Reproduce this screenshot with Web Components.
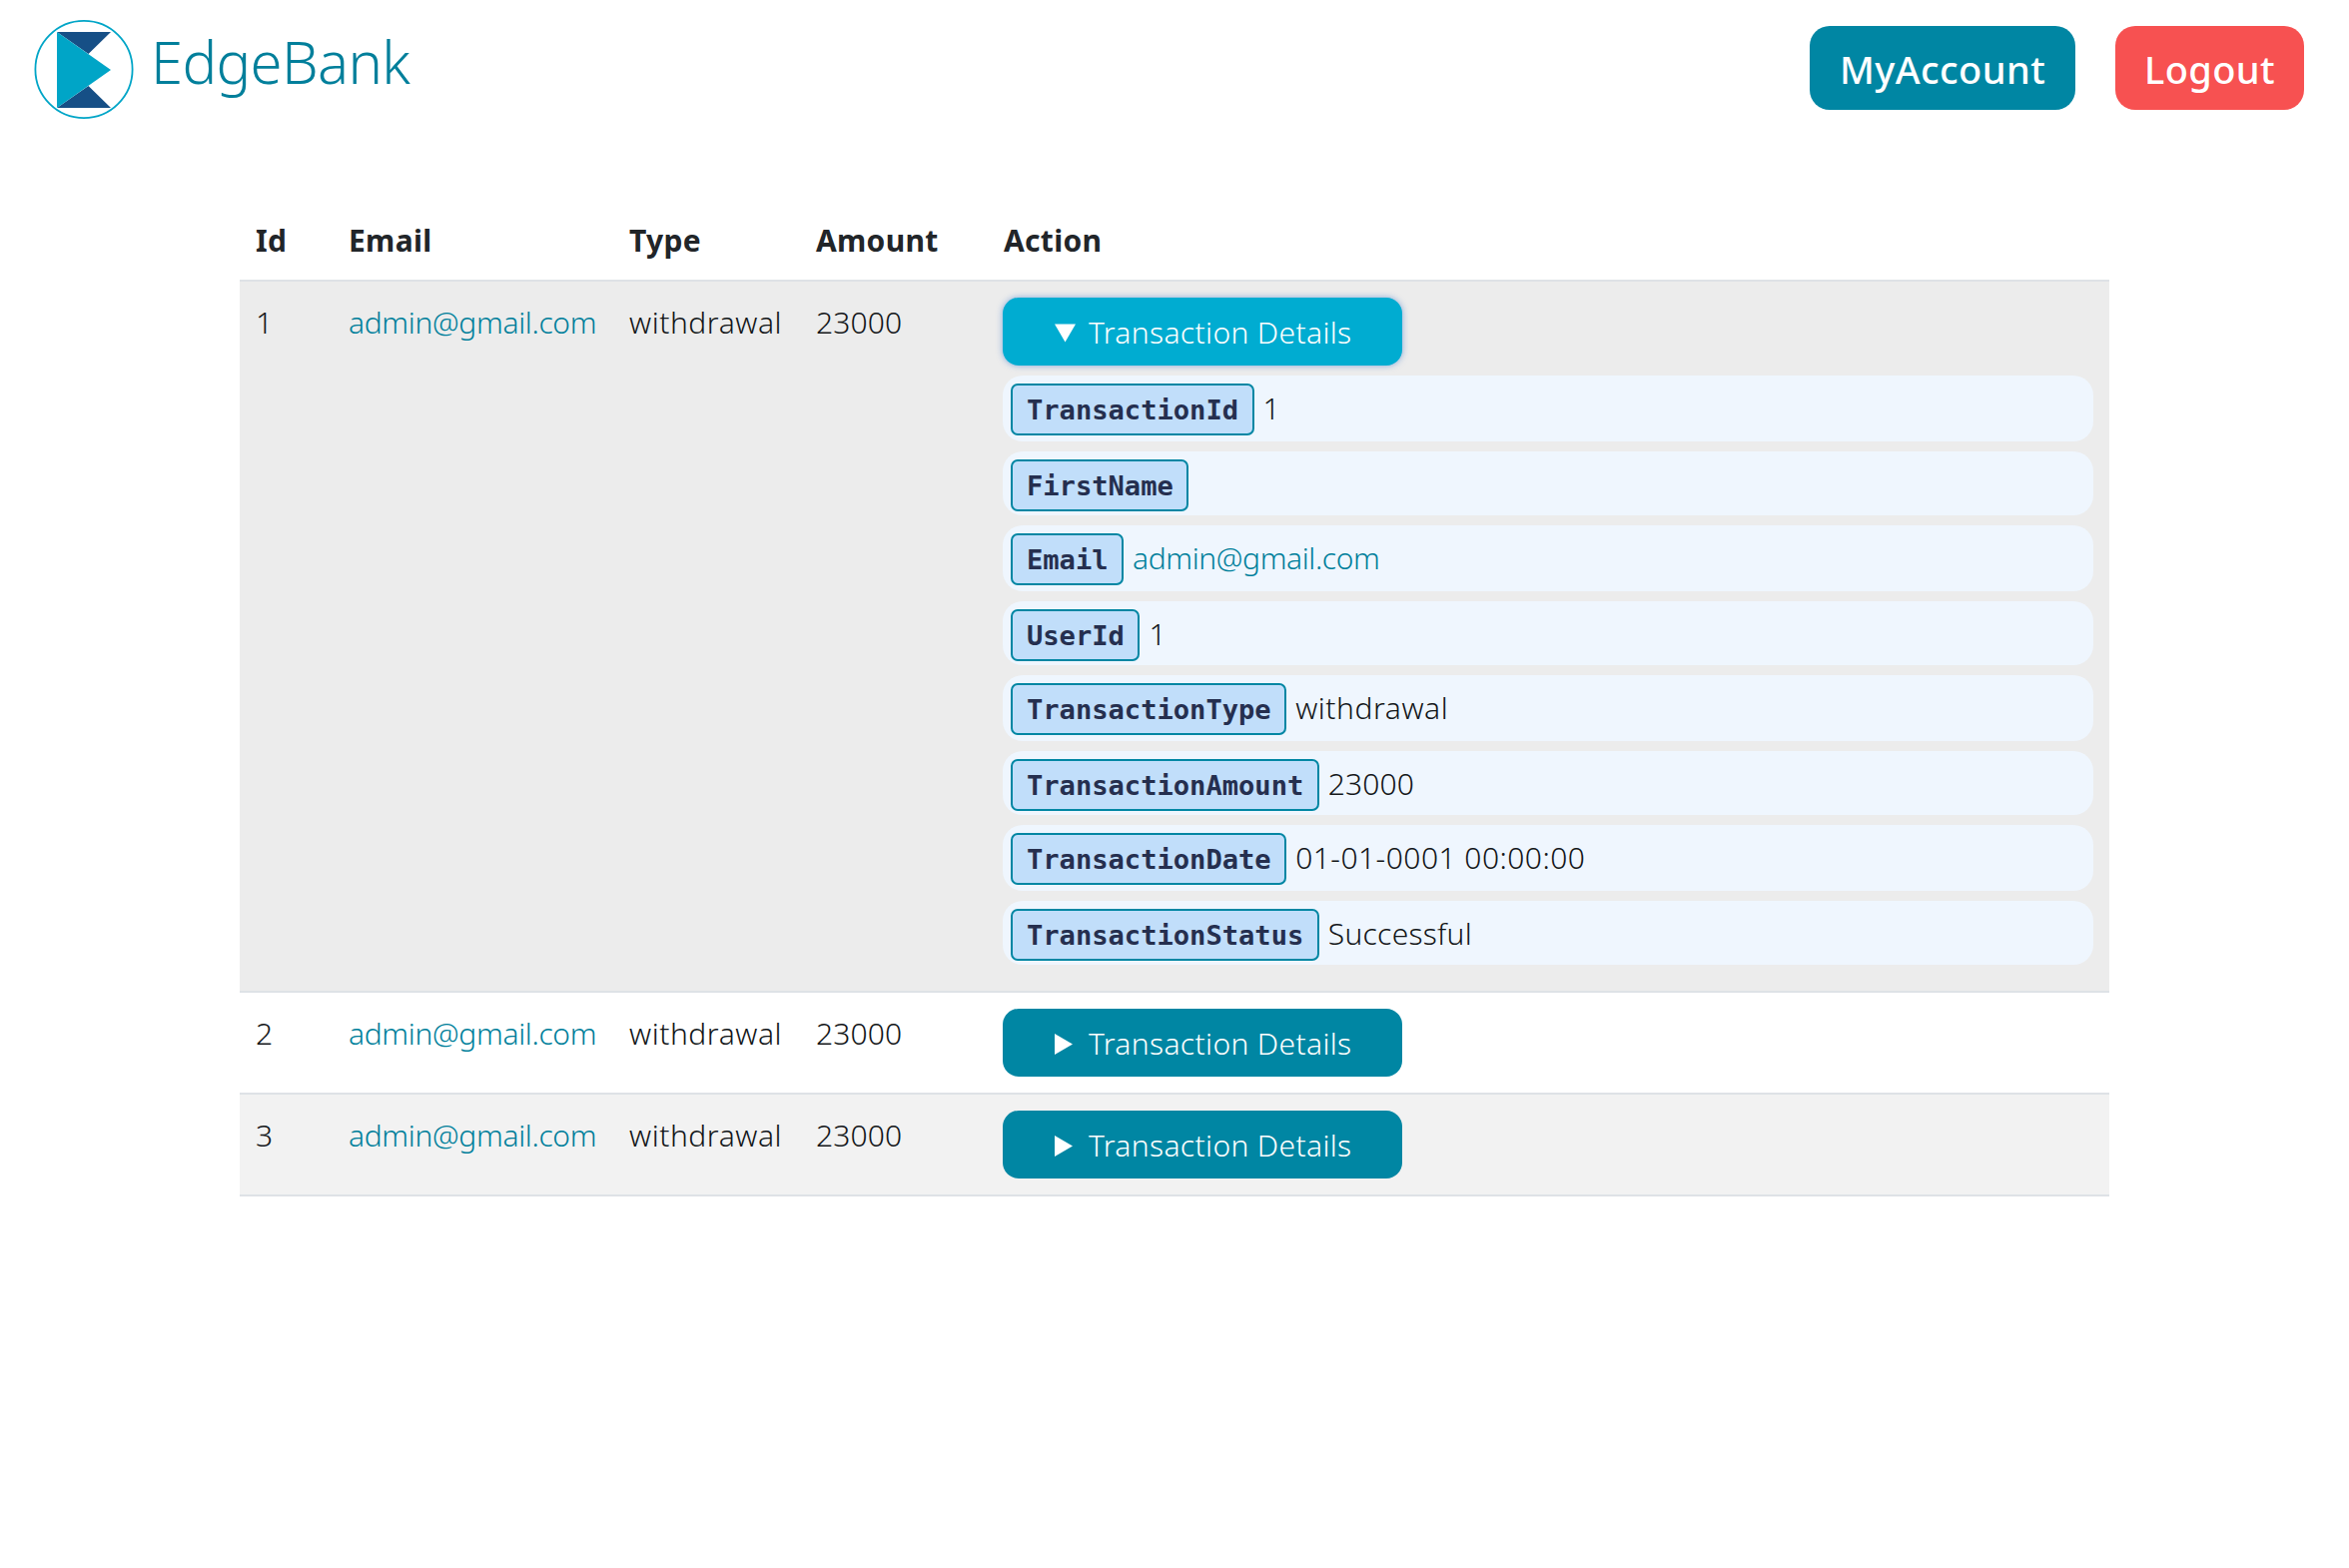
<!DOCTYPE html>
<html lang="en">
<head>
<meta charset="utf-8">
<title>EdgeBank</title>
<style>
  html, body { margin: 0; background: #fff; }
  body { font-family: "Noto Sans", sans-serif; color: #212529; }
</style>
</head>
<body>
<bank-page>
  <site-header slot="header"></site-header>
  <transaction-table>
    <transaction-row row-id="1" email="admin@gmail.com" type="withdrawal" amount="23000" open tint="#ececec">
      <detail-item label="TransactionId">1</detail-item>
      <detail-item label="FirstName"></detail-item>
      <detail-item label="Email"><a-link>admin@gmail.com</a-link></detail-item>
      <detail-item label="UserId">1</detail-item>
      <detail-item label="TransactionType" spacing="0.55px">withdrawal</detail-item>
      <detail-item label="TransactionAmount" spacing="0.1px">23000</detail-item>
      <detail-item label="TransactionDate" spacing="0.45px">01-01-0001 00:00:00</detail-item>
      <detail-item label="TransactionStatus" spacing="0.25px">Successful</detail-item>
    </transaction-row>
    <transaction-row row-id="2" email="admin@gmail.com" type="withdrawal" amount="23000"></transaction-row>
    <transaction-row row-id="3" email="admin@gmail.com" type="withdrawal" amount="23000" tint="#f2f2f2"></transaction-row>
  </transaction-table>
</bank-page>

<script>
const TEAL = '#0086a3';
const LINK_TEAL = '#007f9b';
const THIN_INK = '#14171a';
const BODY_TEXT = 'font-size: 30px; font-weight: 300; line-height: 45px;';

class BankPage extends HTMLElement {
    constructor() {
        super();
        this.attachShadow({mode: 'open'});
        this.shadowRoot.innerHTML = `
            <style>
                :host { display: block; min-height: 1570px; }
                main { padding: 0 240px; }
            </style>
            <slot name="header"></slot>
            <main><slot></slot></main>
        `;
    }
}

class SiteHeader extends HTMLElement {
    constructor() {
        super();
        this.attachShadow({mode: 'open'});
        this.shadowRoot.innerHTML = `
            <style>
                :host { display: flex; justify-content: space-between; align-items: flex-start;
                        height: 204px; box-sizing: border-box; padding: 20px 45px 0 34px; }
                .brand { display: flex; align-items: center; gap: 17px; height: 100px; color: ${LINK_TEAL};
                         font-size: 58px; font-weight: 300; letter-spacing: -0.65px; line-height: 70px; }
                .brand span { position: relative; top: -8px; }
                svg { display: block; }
                nav { display: flex; gap: 40px; margin-top: 6px; }
                button { height: 84px; border: 0; border-radius: 20px; padding: 2px 0 0; color: #fff;
                         font: 500 38px "Noto Sans", sans-serif; letter-spacing: 0.4px; cursor: pointer; }
                .account { width: 266px; background: ${TEAL}; }
                .logout { width: 189px; background: #f75151; }
            </style>
            <div class="brand">
                <svg width="100" height="100" viewBox="0 0 100 100" aria-hidden="true">
                    <circle cx="50" cy="49.5" r="48.6" fill="#fff" stroke="#00a5c7" stroke-width="1.8"/>
                    <path d="M23 12H77L54.5 34ZM23 88H77L54.5 66Z" fill="#164f86"/>
                    <path d="M23 12L77 50L23 88Z" fill="#00a5c7"/>
                </svg>
                <span>EdgeBank</span>
            </div>
            <nav>
                <button class="account">MyAccount</button>
                <button class="logout">Logout</button>
            </nav>
        `;
    }
}

const COLUMNS = 'grid-template-columns: 93px 281px 187px 188px 1fr;';

class TransactionTable extends HTMLElement {
    constructor() {
        super();
        this.attachShadow({mode: 'open'});
        this.shadowRoot.innerHTML = `
            <style>
                :host { display: block; }
                .head { display: grid; ${COLUMNS} border-bottom: 2px solid #dee2e6; }
                .head div { padding: 14px 16px 17px; font-size: 30px; font-weight: 700; letter-spacing: 0.3px; line-height: 45px; color: #212529; }
            </style>
            <div class="head">
                <div>Id</div><div>Email</div><div>Type</div><div>Amount</div><div>Action</div>
            </div>
            <slot></slot>
        `;
    }
}

class TransactionRow extends HTMLElement {
    constructor() {
        super();
        this.attachShadow({mode: 'open'});
    }

    connectedCallback() {
        const tint = this.getAttribute('tint') || '#fff';
        this.shadowRoot.innerHTML = `
            <style>
                :host { display: grid; ${COLUMNS} background: ${tint}; border-bottom: 2px solid #dee2e6; }
                .cell { padding: 18px 16px 0; ${BODY_TEXT} color: ${THIN_INK}; }
                .mail { color: ${LINK_TEAL}; letter-spacing: -0.35px; }
                .kind { letter-spacing: 0.55px; }
                .sum { letter-spacing: 0.1px; }
                .action { padding: 16px 16px 16px 15px; min-width: 0; }
                button { display: flex; align-items: center; width: 400px; height: 68px; padding: 1px 0 0 52px;
                         border: 0; border-radius: 16px; background: ${TEAL}; color: #fff; cursor: pointer;
                         font: 300 30px "Noto Sans", sans-serif; letter-spacing: 0.35px; }
                button svg { display: block; width: 21px; height: 21px; margin: 1px 13px 0 0; flex: none; }
                :host([open]) button { background: #00acd1; box-shadow: 0 0 6px rgba(40, 110, 200, .55); }
                .list { display: none; padding-bottom: 10px; }
                :host([open]) .list { display: block; }
            </style>
            <div class="cell">${this.getAttribute('row-id')}</div>
            <div class="cell mail">${this.getAttribute('email')}</div>
            <div class="cell kind">${this.getAttribute('type')}</div>
            <div class="cell sum">${this.getAttribute('amount')}</div>
            <div class="action">
                <button type="button">
                    <svg viewBox="0 0 21 21" aria-hidden="true"><path fill="#fff" d=""/></svg>
                    Transaction Details
                </button>
                <div class="list"><slot></slot></div>
            </div>
        `;
        this.button = this.shadowRoot.querySelector('button');
        this.button.addEventListener('click', () => this.toggleAttribute('open'));
        this.drawArrow();
    }

    static get observedAttributes() {
        return [ 'open' ];
    }

    attributeChangedCallback() {
        if (this.button) this.drawArrow();
    }

    drawArrow() {
        const arrow = this.shadowRoot.querySelector('svg path');
        arrow.setAttribute('d', this.hasAttribute('open') ? 'M0 1.5H21L10.5 19.5Z' : 'M0 0L18 10.5L0 21Z');
    }
}

class DetailItem extends HTMLElement {
    constructor() {
        super();
        this.attachShadow({mode: 'open'});
    }

    connectedCallback() {
        const spacing = this.getAttribute('spacing');
        this.shadowRoot.innerHTML = `
            <style>
                :host { display: flex; align-items: flex-start; gap: 9px; box-sizing: border-box; height: 66px;
                        margin-top: 10px; padding: 8px 8px 0; border-radius: 20px; background: #eff6fe;
                        ${BODY_TEXT} color: ${THIN_INK}; }
                :host(:nth-child(even)) { height: 64px; }
                code { box-sizing: border-box; height: 52px; padding: 0 13.5px 0 14px; border: 2px solid ${TEAL}; border-radius: 7px;
                       background: #c1defa; color: #252f4f;
                       font: 700 27.1px/50px "DejaVu Sans Mono", monospace; letter-spacing: 0; }
                span { line-height: 49px; ${spacing ? `letter-spacing: ${spacing};` : ''} }
            </style>
            <code>${this.getAttribute('label')}</code>
            <span><slot></slot></span>
        `;
    }
}

class ALink extends HTMLElement {
    constructor() {
        super();
        this.attachShadow({mode: 'open'});
        this.shadowRoot.innerHTML = `<style>:host { color: ${LINK_TEAL}; letter-spacing: -0.4px; }</style><slot></slot>`;
    }
}

customElements.define('bank-page', BankPage);
customElements.define('site-header', SiteHeader);
customElements.define('transaction-table', TransactionTable);
customElements.define('transaction-row', TransactionRow);
customElements.define('detail-item', DetailItem);
customElements.define('a-link', ALink);
</script>
</body>
</html>
